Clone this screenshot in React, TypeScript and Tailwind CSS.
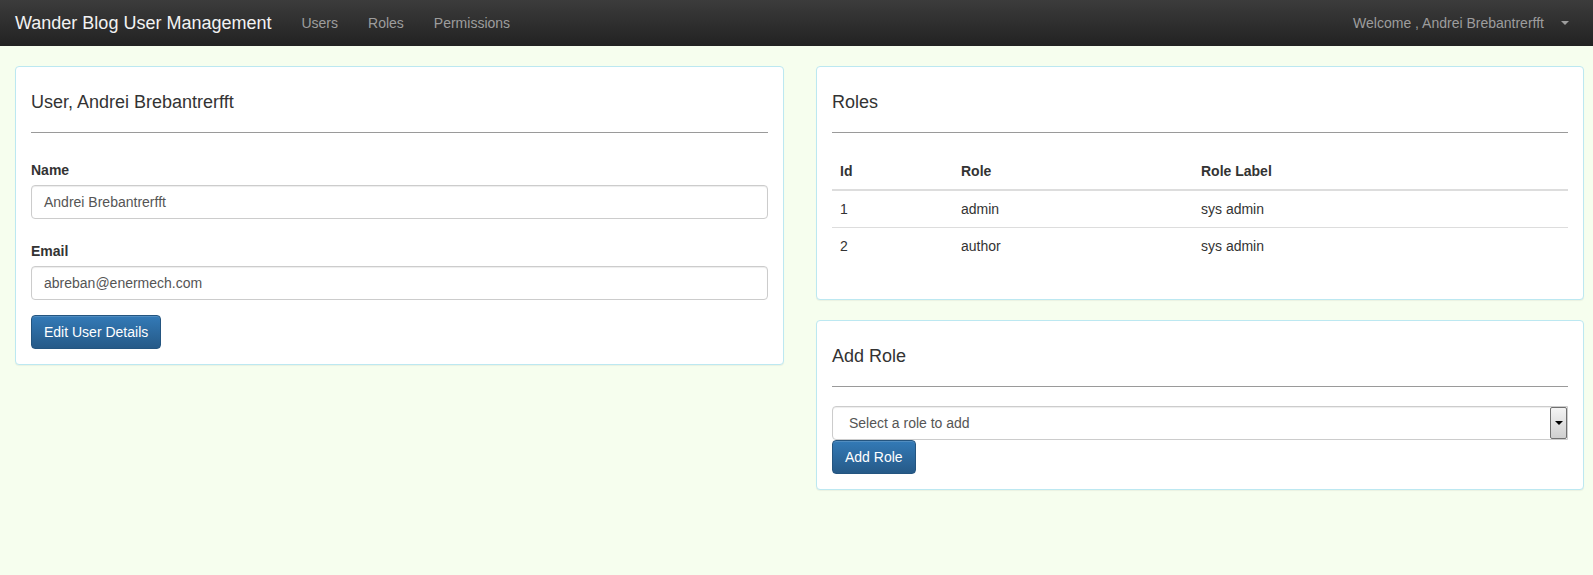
const roles = [
  { id: 1, role: "admin", label: "sys admin" },
  { id: 2, role: "author", label: "sys admin" },
];

function Navbar() {
  return (
    <div className="flex h-[46px] items-center justify-between bg-linear-to-b from-[#3c3c3c] to-[#222222] text-[14px]">
      <div className="flex items-center">
        <span className="px-[15px] text-[18px] text-[#f2f2f2]">Wander Blog User Management</span>
        <span className="px-[15px] text-[#9d9d9d]">Users</span>
        <span className="px-[15px] text-[#9d9d9d]">Roles</span>
        <span className="px-[15px] text-[#9d9d9d]">Permissions</span>
      </div>
      <div className="flex items-center pr-[24px] text-[#9d9d9d]">
        <span>Welcome , Andrei Brebantrerfft</span>
        <span className="ml-[17px] h-0 w-0 border-x-[4px] border-t-[4px] border-x-transparent border-t-[#9d9d9d]" />
      </div>
    </div>
  );
}

function Panel({ title, children }: { title: string; children: React.ReactNode }) {
  return (
    <div className="rounded-[4px] border border-[#bce8f1] bg-white p-[15px] shadow-[0_1px_1px_rgba(0,0,0,0.05)]">
      <h4 className="mt-[10px] text-[18px] leading-[20px] text-[#333]">{title}</h4>
      <div className="mt-[20px] border-t border-[#9a9a9a]" />
      {children}
    </div>
  );
}

function TextInput({ value }: { value: string }) {
  return (
    <div className="flex h-[34px] items-center rounded-[4px] border border-[#ccc] px-[12px] text-[14px] text-[#555] shadow-[inset_0_1px_1px_rgba(0,0,0,0.075)]">
      {value}
    </div>
  );
}

function PrimaryButton({ label, className }: { label: string; className?: string }) {
  return (
    <button
      className={`rounded-[4px] border border-[#245580] bg-linear-to-b from-[#337ab7] to-[#265a88] px-[12px] text-[14px] text-white shadow-[inset_0_1px_0_rgba(255,255,255,0.15)] ${className ?? ""}`}
    >
      {label}
    </button>
  );
}

export default function App() {
  return (
    <div className="min-h-screen bg-[#f6feee] font-['Liberation_Sans',Arial,sans-serif] text-[#333]">
      <Navbar />
      <div className="mt-[20px] flex gap-[32px] pl-[15px]">
        <div className="w-[769px] shrink-0">
          <Panel title="User, Andrei Brebantrerfft">
            <div className="pt-[27px]">
              <div className="mb-[5px] text-[14px] font-bold leading-[20px]">Name</div>
              <TextInput value="Andrei Brebantrerfft" />
            </div>
            <div className="pt-[22px]">
              <div className="mb-[5px] text-[14px] font-bold leading-[20px]">Email</div>
              <TextInput value="abreban@enermech.com" />
            </div>
            <PrimaryButton label="Edit User Details" className="mt-[15px] h-[34px]" />
          </Panel>
        </div>
        <div className="w-[768px] shrink-0">
          <Panel title="Roles">
            <table className="mb-[20px] mt-[20px] w-full border-collapse text-left text-[14px] leading-[20px]">
              <thead>
                <tr className="border-b-2 border-[#ddd]">
                  <th className="w-[121px] p-[8px] font-bold">Id</th>
                  <th className="w-[240px] p-[8px] font-bold">Role</th>
                  <th className="p-[8px] font-bold">Role Label</th>
                </tr>
              </thead>
              <tbody>
                {roles.map((r, i) => (
                  <tr key={r.id} className={i > 0 ? "border-t border-[#ddd]" : ""}>
                    <td className="p-[8px]">{r.id}</td>
                    <td className="p-[8px]">{r.role}</td>
                    <td className="p-[8px]">{r.label}</td>
                  </tr>
                ))}
              </tbody>
            </table>
          </Panel>
          <div className="mt-[20px]">
            <Panel title="Add Role">
              <div className="mt-[19px] flex h-[34px] items-center rounded-l-[4px] border border-[#ccc] text-[14px] text-[#555] shadow-[inset_0_1px_1px_rgba(0,0,0,0.075)]">
                <span className="flex-1 pl-[16px]">Select a role to add</span>
                <div className="flex h-[32px] w-[17px] items-center justify-center rounded-[2px] border border-[#707070] bg-linear-to-b from-[#f4f4f4] to-[#cfcfcf]">
                  <span className="h-0 w-0 border-x-[4px] border-t-[4px] border-x-transparent border-t-black" />
                </div>
              </div>
              <PrimaryButton label="Add Role" className="h-[34px]" />
            </Panel>
          </div>
        </div>
      </div>
    </div>
  );
}
